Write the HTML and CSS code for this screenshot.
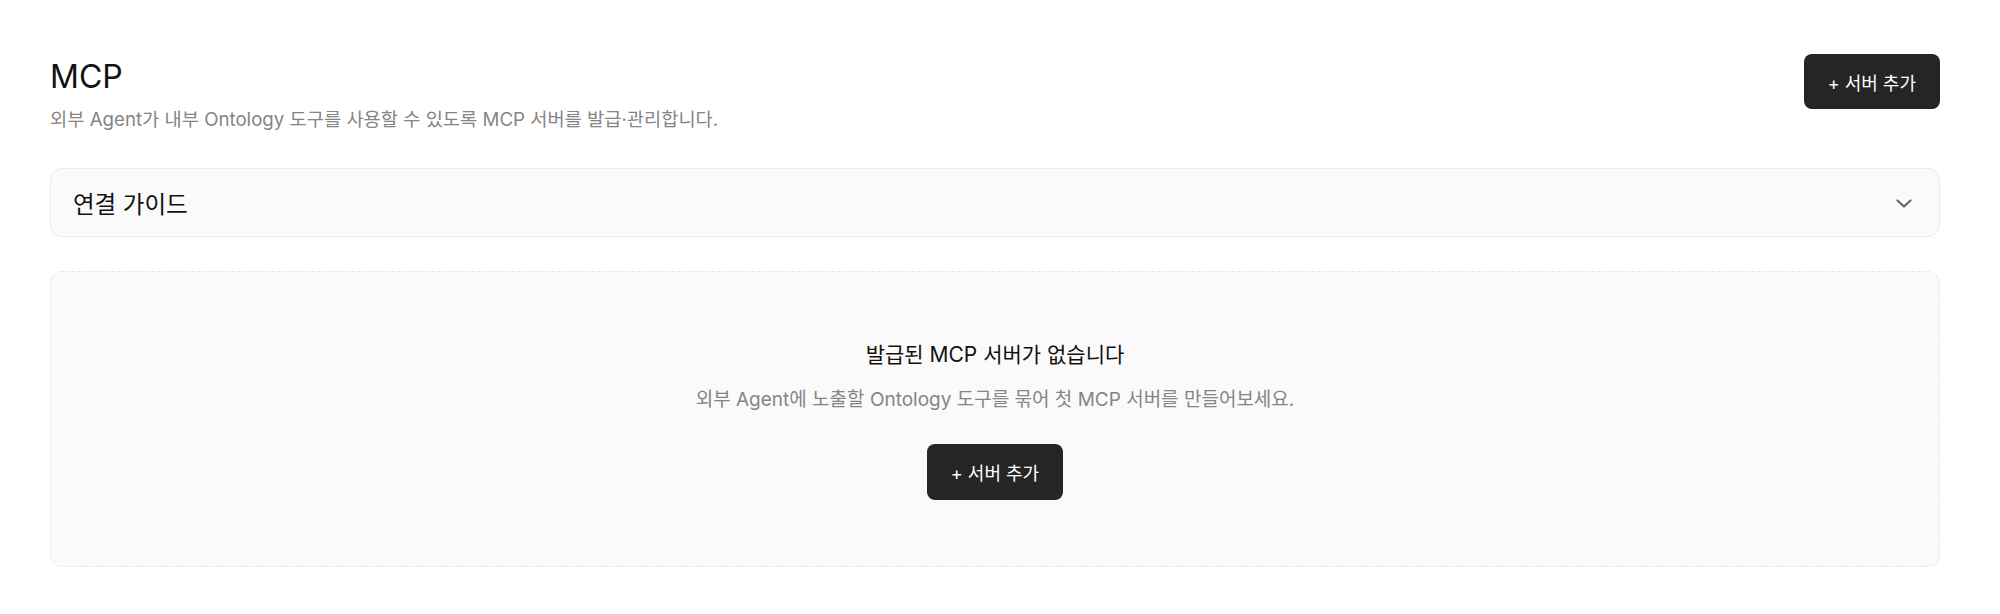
FILE: index.html
```html
<!DOCTYPE html>
<html lang="ko">
<head>
    <meta charset="UTF-8">
    <meta name="viewport" content="width=device-width, initial-scale=1.0">
    <title>MCP</title>
    <link rel="stylesheet" href="styles.css">
</head>
<body>

    <main class="page">
        <header class="page-header">
            <div class="page-title">
                <h1>MCP</h1>
                <p>외부 Agent가 내부 Ontology 도구를 사용할 수 있도록 MCP 서버를 발급·관리합니다.</p>
            </div>
            <button class="btn-dark">+ 서버 추가</button>
        </header>

        <!-- collapsible connection guide -->
        <div class="guide">
            <span class="guide-title">연결 가이드</span>
            <svg class="chevron" width="20" height="20" viewBox="0 0 20 20" fill="none">
                <path d="M3.5 7.5L10 13.5L16.5 7.5" stroke="#666" stroke-width="2.2" stroke-linecap="round" stroke-linejoin="round"/>
            </svg>
        </div>

        <!-- empty state when no server exists -->
        <section class="empty">
            <h2>발급된 MCP 서버가 없습니다</h2>
            <p>외부 Agent에 노출할 Ontology 도구를 묶어 첫 MCP 서버를 만들어보세요.</p>
            <button class="btn-dark">+ 서버 추가</button>
        </section>
    </main>

</body>
</html>
```

FILE: styles.css
```css
body {
    font-family: Inter, "Noto Sans CJK KR", sans-serif;
    margin: 0;
    padding: 0;
    background-color: #fff;
    color: #111;
}

.page {
    padding: 54px 60px 0 50px;
}

.page-header {
    display: flex;
    justify-content: space-between;
    align-items: flex-start;
}

.page-title h1 {
    margin: 3px 0 0;
    font-size: 32px;
    font-weight: 400;
    line-height: 40px;
}

.page-title p {
    margin: 10px 0 0;
    font-size: 18.7px;
    line-height: 26px;
    color: #858585;
}

.btn-dark {
    background-color: #252525;
    color: #fff;
    height: 55px;
    padding: 0 24px;
    border: none;
    border-radius: 8px;
    font-family: inherit;
    font-size: 18px;
    cursor: pointer;
}

.guide {
    margin-top: 35px;
    height: 69px;
    box-sizing: border-box;
    display: flex;
    align-items: center;
    justify-content: space-between;
    padding: 0 25px 0 22px;
    background-color: #fafafa;
    border: 1px solid #ebebeb;
    border-radius: 12px;
}

.guide-title {
    font-size: 23.5px;
}

.empty {
    margin-top: 34px;
    padding: 69px 0 66px;
    display: flex;
    flex-direction: column;
    align-items: center;
    background-color: #fafafa;
    border: 1px dashed #e6e6e6;
    border-radius: 12px;
}

.empty h2 {
    margin: 0;
    font-size: 21px;
    font-weight: 400;
    line-height: 28px;
}

.empty p {
    margin: 18px 0 0;
    font-size: 19px;
    line-height: 26px;
    color: #858585;
}

.empty .btn-dark {
    margin-top: 31px;
    height: 56px;
}
```
